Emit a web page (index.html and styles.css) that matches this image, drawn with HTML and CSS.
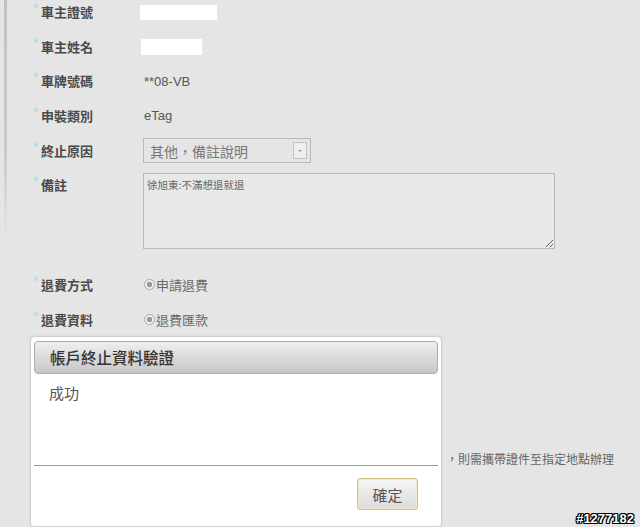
FILE: index.html
```html
<!DOCTYPE html>
<html lang="zh-Hant">
    <head>
        <title>帳戶終止</title>
        <meta charset="utf-8" />
        <meta name="viewport" content="width=device-width, initial-scale=1.0" />
        <link rel="stylesheet" href="styles.css">
    </head>
    <body>
        <div id="form">
            <div class="row">
                <span class="label">車主證號</span>
                <span class="value"><span class="mask id"></span></span>
            </div>
            <div class="row">
                <span class="label">車主姓名</span>
                <span class="value"><span class="mask name"></span></span>
            </div>
            <div class="row">
                <span class="label">車牌號碼</span>
                <span class="value">**08-VB</span>
            </div>
            <div class="row">
                <span class="label">申裝類別</span>
                <span class="value">eTag</span>
            </div>
            <div class="row">
                <span class="label">終止原因</span>
                <span class="value">
                    <span class="select">其他，備註說明<span class="arrow"></span></span>
                </span>
            </div>
            <div class="row top">
                <span class="label">備註</span>
                <span class="value"><textarea readonly>徐旭東:不滿想退就退</textarea></span>
            </div>
            <div class="row gap">
                <span class="label">退費方式</span>
                <span class="value cjk"><span class="radio"></span>申請退費</span>
            </div>
            <div class="row">
                <span class="label">退費資料</span>
                <span class="value cjk"><span class="radio"></span>退費匯款</span>
            </div>
            <div class="row note">
                <span class="label"></span>
                <span class="value small"><span class="lead">如欲以臨櫃方式辦理退費或未能提供本人之帳戶資料者</span>，則需攜帶證件至指定地點辦理</span>
            </div>
            <div class="row last">
                <span class="label">戶名</span>
                <span class="value">XXXXXXXXX</span>
            </div>
        </div>

        <div id="dialog">
            <div class="title">帳戶終止資料驗證</div>
            <div class="message">成功</div>
            <div class="buttons">
                <button type="button">確定</button>
            </div>
        </div>

        <div id="stamp">#1277182</div>
    </body>
</html>
```

FILE: styles.css
```css
html, body {
    margin: 0px;
    padding: 0px;
    height: 100%;
    overflow: hidden;
}
body {
    background: linear-gradient(to bottom, #c2c2c2, #c9c9c9 150px, #e5e5e5 240px) 4px 0 / 3px 240px no-repeat, #e5e5e5;
    font-family: "Liberation Sans", "Noto Sans CJK TC", sans-serif;
    color: #555;
}
#form {
    padding-left: 33px;
}
.row {
    display: grid;
    grid-template-columns: 111px 1fr;
    align-items: center;
    height: 24px;
    margin-bottom: 10.5px;
    font-size: 13px;
}
.row.top {
    align-items: start;
    height: auto;
    margin-bottom: 24px;
}
.row.gap {
    margin-bottom: 11px;
}
.row.note {
    margin-top: 115px;
    margin-bottom: 52px;
}
.label {
    font-family: "Noto Sans CJK TC", sans-serif;
    font-weight: bold;
    color: #4a4a4a;
    line-height: 24px;
}
.label::before {
    content: "*";
    display: inline-block;
    width: 8px;
    color: #a9dcdc;
    font-family: "Liberation Sans", sans-serif;
    font-size: 14px;
    font-weight: normal;
    vertical-align: top;
    line-height: 16px;
}
.note .label::before {
    content: none;
}
.value {
    font-family: "Liberation Sans", "Noto Sans CJK TC", sans-serif;
    display: flex;
    align-items: center;
}
.value.cjk {
    font-family: "Noto Sans CJK TC", sans-serif;
    color: #6a6a6a;
}
.small {
    font-family: "Noto Sans CJK TC", sans-serif;
    font-size: 12px;
    color: #666;
    white-space: nowrap;
}
.lead {
    margin-right: 14px;
}
.mask {
    display: block;
    background: white;
    height: 15px;
}
.mask.id {
    margin-left: -4px;
    width: 77px;
}
.mask.name {
    margin-left: -3px;
    width: 61px;
    height: 16px;
}
.select {
    display: flex;
    align-items: center;
    box-sizing: border-box;
    margin-left: -1px;
    border: 1px solid #b9b9b9;
    padding-left: 6px;
    width: 168px;
    height: 25px;
    font-family: "Noto Sans CJK TC", sans-serif;
    font-size: 14px;
    color: #777;
}
.arrow {
    box-sizing: border-box;
    margin-left: auto;
    margin-right: 3px;
    border: 1px solid #c2c2c2;
    width: 14px;
    height: 17px;
    background: #eeeeee;
    position: relative;
}
.arrow::after {
    content: "";
    position: absolute;
    left: 4px;
    top: 7px;
    border-left: 2px solid transparent;
    border-right: 2px solid transparent;
    border-top: 2px solid #999;
}
textarea {
    display: block;
    box-sizing: border-box;
    margin: 0px 0px 0px -1px;
    border: 1px solid #b9b9b9;
    padding: 3px 3px;
    width: 412px;
    height: 76px;
    background: #e8e8e8;
    font-family: "Noto Sans CJK TC", sans-serif;
    font-size: 10.5px;
    color: #666;
    outline: 0;
}
.radio {
    display: inline-block;
    box-sizing: border-box;
    margin-right: 1px;
    border: 1px solid #aaa;
    border-radius: 50%;
    width: 11px;
    height: 11px;
    background: radial-gradient(circle, #999 0 2.5px, #eee 3px);
}
#dialog {
    position: absolute;
    left: 30px;
    top: 336px;
    box-sizing: border-box;
    display: flex;
    flex-direction: column;
    border: 1px solid #cfcfcf;
    border-radius: 4px;
    padding: 4px 3px 3px;
    width: 412px;
    height: 191px;
    background: white;
    box-shadow: 0 0 2px rgba(0, 0, 0, 0.1);
}
.title {
    box-sizing: border-box;
    border: 1px solid #adadad;
    border-radius: 4px;
    padding-left: 15px;
    height: 33px;
    line-height: 31px;
    background: linear-gradient(to bottom, #efefef, #d6d6d6 60%, #c8c8c8);
    font-family: "Noto Sans CJK TC", sans-serif;
    font-size: 15.5px;
    font-weight: 500;
    color: #333;
}
.message {
    flex: 1;
    border-bottom: 1px solid #9a9a9a;
    padding: 8px 15px 0px;
    font-family: "Noto Sans CJK TC", sans-serif;
    font-size: 15px;
    color: #555;
}
.buttons {
    display: flex;
    justify-content: flex-end;
    padding: 12px 20px 13px 0px;
}
button {
    box-sizing: border-box;
    border: 1px solid #d6bd87;
    border-radius: 3px;
    padding: 0px;
    width: 61px;
    height: 32px;
    background: linear-gradient(to bottom, #f7f7f7, #e6e6e6 55%, #dcdcdc);
    box-shadow: inset 0 0 0 1px #f3e7c8;
    font-family: "Noto Sans CJK TC", sans-serif;
    font-size: 15px;
    color: #555;
}
#stamp {
    position: absolute;
    right: 6px;
    bottom: 1px;
    font-family: "Liberation Sans", sans-serif;
    font-size: 13px;
    font-weight: bold;
    color: white;
    text-shadow: -1px -1px 0 #000, 1px -1px 0 #000, -1px 1px 0 #000, 1px 1px 0 #000, 0 1px 0 #000, 0 -1px 0 #000, 1px 0 0 #000, -1px 0 0 #000;
}
```
